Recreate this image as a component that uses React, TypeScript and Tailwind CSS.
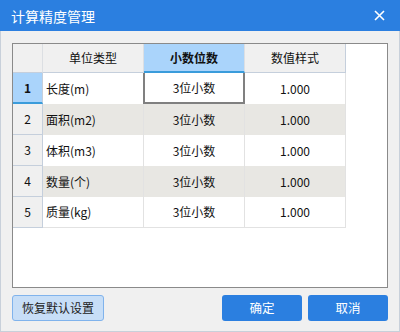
import React from 'react';

const rows = [
  { id: 1, unit: '长度(m)', digits: '3位小数', format: '1.000' },
  { id: 2, unit: '面积(m2)', digits: '3位小数', format: '1.000' },
  { id: 3, unit: '体积(m3)', digits: '3位小数', format: '1.000' },
  { id: 4, unit: '数量(个)', digits: '3位小数', format: '1.000' },
  { id: 5, unit: '质量(kg)', digits: '3位小数', format: '1.000' },
];

const font = { fontFamily: '"Noto Sans CJK SC", "Noto Sans", sans-serif' };

export default function App() {
  return (
    <div
      className="w-[400px] h-[332px] flex flex-col bg-[#f0f0f0] border-x border-b border-[#c8d0da] text-[12px] text-[#111]"
      style={font}
    >
      {/* title bar */}
      <div className="h-[31px] shrink-0 -mx-px bg-[#2b7fe0] flex items-center justify-between pl-[11px] pr-[15px]">
        <span className="text-white text-[14px] leading-none">计算精度管理</span>
        <svg width="11" height="11" viewBox="0 0 11 11" className="mt-[-1px]">
          <path d="M1 1 L10 10 M10 1 L1 10" stroke="white" strokeWidth="1.6" />
        </svg>
      </div>

      <div className="flex-1 flex flex-col px-[11px] pt-[12px] pb-[11px]">
        {/* grid */}
        <div className="h-[245px] border border-[#8a8a8a] bg-white">
          <div className="grid grid-cols-[30px_101px_101px_101px]">
            {/* header */}
            <div className="h-[29px] bg-[#f0f0f0] border-r border-[#dcdfe3] border-b border-b-[#c5cfdc]" />
            <div className="h-[29px] bg-[#f0f0f0] border-r border-[#dcdfe3] border-b border-b-[#c5cfdc] flex items-center justify-center">
              单位类型
            </div>
            <div className="h-[29px] bg-[#aad4fb] border-r border-[#dcdfe3] border-b-2 border-b-[#3a9cdb] flex items-center justify-center font-bold">
              小数位数
            </div>
            <div className="h-[29px] bg-[#f0f0f0] border-r border-[#c5cfdc] border-b border-b-[#c5cfdc] flex items-center justify-center">
              数值样式
            </div>

            {rows.map((r, i) => {
              const even = i % 2 === 1;
              const bg = even ? 'bg-[#e8e7e3]' : 'bg-white';
              const sel = i === 0;
              return (
                <React.Fragment key={r.id}>
                  <div
                    className={
                      sel
                        ? 'h-[31px] bg-[#aad4fb] border-r border-[#c5cfdc] border-b-2 border-b-[#3a9cdb] flex items-center justify-center font-bold'
                        : 'h-[31px] bg-[#f0f0f0] border-r border-[#c5cfdc] border-b border-b-[#c5cfdc] flex items-center justify-center'
                    }
                  >
                    {r.id}
                  </div>
                  <div className={`h-[31px] ${bg} border-r border-[#e2e2e2] ${i === 4 ? 'border-b border-b-[#e2e2e2]' : ''} flex items-center pl-[3px]`}>
                    {r.unit}
                  </div>
                  <div
                    className={
                      sel
                        ? 'h-[31px] bg-white border-x-2 border-b-2 border-[#808080] flex items-center justify-center -ml-px'
                        : `h-[31px] ${bg} border-r border-[#e2e2e2] ${i === 4 ? 'border-b border-b-[#e2e2e2]' : ''} flex items-center justify-center`
                    }
                  >
                    {r.digits}
                  </div>
                  <div className={`h-[31px] ${bg} border-r border-[#e2e2e2] ${i === 4 ? 'border-b border-b-[#e2e2e2]' : ''} flex items-center justify-center`}>
                    {r.format}
                  </div>
                </React.Fragment>
              );
            })}
          </div>
        </div>

        {/* footer buttons */}
        <div className="mt-[7px] flex items-center">
          <button className="h-[26px] w-[92px] rounded-[3px] bg-[#c7def7] border border-[#80b3ec] text-[12px] text-[#222]">
            恢复默认设置
          </button>
          <div className="flex-1" />
          <button className="h-[26px] w-[80px] rounded-[3px] bg-[#2b7fe0] text-white text-[12.5px]">
            确定
          </button>
          <button className="h-[26px] w-[80px] ml-[6px] rounded-[3px] bg-[#2b7fe0] text-white text-[12.5px]">
            取消
          </button>
        </div>
      </div>
    </div>
  );
}
